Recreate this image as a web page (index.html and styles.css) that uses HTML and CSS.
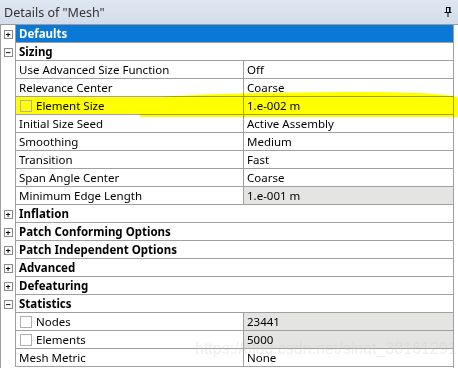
FILE: index.html
```html
<!DOCTYPE html>
<html lang="en">

<head>
    <meta charset="UTF-8" />
    <title>Details of "Mesh"</title>
    <link rel="stylesheet" href="styles.css">
</head>

<body>
    <div class="details">
        <!-- 标题栏 -->
        <div class="title">
            <span>Details of "Mesh"</span>
            <svg class="pin" width="8" height="10" viewBox="0 0 8 10">
                <path d="M2 0.5H6.5M2.5 0.5V5M5.5 0.5V5M6 0.5V5M0.5 5.5H7.5M4 5.5V10" stroke="#000" stroke-width="1" fill="none" />
            </svg>
        </div>

        <div class="panel">
            <div class="row cat selected">
                <div class="gutter"><span class="box">+</span></div>
                <div class="name">Defaults</div>
            </div>
            <div class="row cat">
                <div class="gutter"><span class="box">−</span></div>
                <div class="name">Sizing</div>
            </div>
            <div class="row">
                <div class="gutter"></div>
                <div class="name">Use Advanced Size Function</div>
                <div class="value">Off</div>
            </div>
            <div class="row">
                <div class="gutter"></div>
                <div class="name">Relevance Center</div>
                <div class="value">Coarse</div>
            </div>
            <div class="row marked">
                <div class="gutter"></div>
                <div class="name"><span class="check"></span>Element Size</div>
                <div class="value">1.e-002 m</div>
            </div>
            <div class="row">
                <div class="gutter"></div>
                <div class="name">Initial Size Seed</div>
                <div class="value">Active Assembly</div>
            </div>
            <div class="row">
                <div class="gutter"></div>
                <div class="name">Smoothing</div>
                <div class="value">Medium</div>
            </div>
            <div class="row">
                <div class="gutter"></div>
                <div class="name">Transition</div>
                <div class="value">Fast</div>
            </div>
            <div class="row">
                <div class="gutter"></div>
                <div class="name">Span Angle Center</div>
                <div class="value">Coarse</div>
            </div>
            <div class="row">
                <div class="gutter"></div>
                <div class="name">Minimum Edge Length</div>
                <div class="value readonly">1.e-001 m</div>
            </div>
            <div class="row cat">
                <div class="gutter"><span class="box">+</span></div>
                <div class="name">Inflation</div>
            </div>
            <div class="row cat">
                <div class="gutter"><span class="box">+</span></div>
                <div class="name">Patch Conforming Options</div>
            </div>
            <div class="row cat">
                <div class="gutter"><span class="box">+</span></div>
                <div class="name">Patch Independent Options</div>
            </div>
            <div class="row cat">
                <div class="gutter"><span class="box">+</span></div>
                <div class="name">Advanced</div>
            </div>
            <div class="row cat">
                <div class="gutter"><span class="box">+</span></div>
                <div class="name">Defeaturing</div>
            </div>
            <div class="row cat">
                <div class="gutter"><span class="box">−</span></div>
                <div class="name">Statistics</div>
            </div>
            <div class="row">
                <div class="gutter"></div>
                <div class="name"><span class="check"></span>Nodes</div>
                <div class="value readonly">23441</div>
            </div>
            <div class="row">
                <div class="gutter"></div>
                <div class="name"><span class="check"></span>Elements</div>
                <div class="value readonly">5000</div>
            </div>
            <div class="row">
                <div class="gutter"></div>
                <div class="name">Mesh Metric</div>
                <div class="value">None</div>
            </div>
        </div>

        <!-- 荧光笔痕迹 -->
        <div class="stroke"></div>
        <!-- 水印 -->
        <div class="mark">https://blog.csdn.net/sinat_38161291</div>
    </div>
</body>

</html>
```

FILE: styles.css
```css
* {
    margin: 0;
    padding: 0;
    box-sizing: border-box;
}

body {
    background: #fff;
    font-family: "Noto Sans", "Noto Sans CJK SC", sans-serif;
    font-size: 11.5px;
    color: #000;
}

.details {
    width: 458px;
    height: 371px;
    position: relative;
    overflow: hidden;
}

.title {
    height: 25px;
    padding-left: 4px;
    padding-right: 6px;
    display: flex;
    align-items: center;
    justify-content: space-between;
    background: linear-gradient(#dfe7f1, #d3dde9);
    border-bottom: 1px solid #9a9a9a;
    font-size: 12.5px;
    color: #333;
}

.panel {
    width: 454px;
    border-left: 1px solid #a0a0a0;
    border-right: 1px solid #a0a0a0;
    padding-bottom: 1px;
}

.row {
    display: flex;
    height: 18px;
}

.gutter {
    width: 15px;
    flex: none;
    border-right: 1px solid #a0a0a0;
    display: flex;
    align-items: center;
    justify-content: center;
}

.box {
    width: 9px;
    height: 9px;
    border: 1px solid #8a8a8a;
    display: flex;
    align-items: center;
    justify-content: center;
    font-size: 9px;
    line-height: 1;
    font-weight: bold;
    background: #fff;
}

.name,
.value {
    border-bottom: 1px solid #a0a0a0;
    display: flex;
    align-items: center;
    padding-left: 3px;
    white-space: nowrap;
}

.name {
    width: 228px;
    flex: none;
    border-right: 1px solid #a0a0a0;
}

.value {
    flex: 1;
}

.cat .name {
    flex: 1;
    border-right: none;
    font-weight: bold;
}

.selected .name {
    background: #0a78d6;
    color: #fff;
}

.readonly {
    background: #e4e4e2;
}

.marked .name,
.marked .value {
    background: #ffff00;
}

.check {
    width: 12px;
    height: 12px;
    border: 1px solid #b0b0b0;
    margin-left: 1px;
    margin-right: 4px;
}

.stroke {
    position: absolute;
    left: 140px;
    top: 92px;
    width: 318px;
    height: 25px;
    background: #ffff00;
    border-radius: 70% 30% 0 0 / 35% 25% 0 0;
    mix-blend-mode: multiply;
}

.mark {
    position: absolute;
    left: 195px;
    top: 340px;
    font-family: "Liberation Sans", sans-serif;
    font-size: 16px;
    color: rgba(200, 200, 200, 0.3);
    white-space: nowrap;
}
```
